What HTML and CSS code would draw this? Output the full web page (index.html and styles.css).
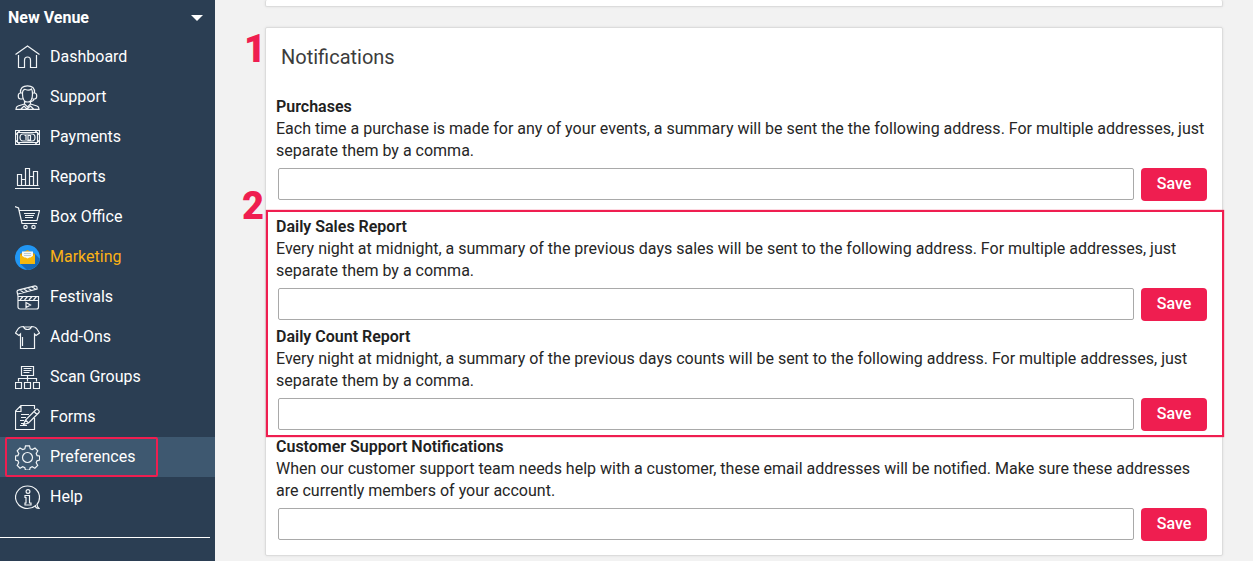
FILE: index.html
```html
<!DOCTYPE html>
<html lang="en">
<head>
<meta charset="utf-8">
<title>Preferences</title>
<link rel="stylesheet" href="styles.css">
</head>
<body>
<div class="app">
  <aside class="sidebar">
    <button class="venue" type="button">New Venue<span class="caret"></span></button>
    <nav class="menu">
      <a class="item" href="#"><svg class="icon" viewBox="0 0 25 25"><path d="M.5 9.500 12.500 1l12 8.500M3.500 10v12.500h6V15c0-4 6-4 6 0v7.500h6V10"/></svg>Dashboard</a>
      <a class="item" href="#"><svg class="icon" viewBox="0 0 25 25"><path d="M5.500 8C5 3 8 .8 12.500.8S20 3 19.500 8M7.500 8c0-3 2-4 3-3.500 3 1.300 5 .3 6-.5 1 1.500 1 3 1 5 0 5-2 8-5 8s-5-3-5-8zM7 8H5.500c-3 0-3 6 0 6H7.500M18 8h1.500c3 0 3 6 0 6H17.500M19 14c0 2-3 2.500-5 2.500M9.500 16v3l3 3 3-3v-3M9.500 19 3 21c-1.500.5-2 1.500-2 3.300h23c0-1.800-.5-2.800-2-3.300l-6.500-2M6 24l3-3 3 3 3.500-3 3 3"/></svg>Support</a>
      <a class="item" href="#"><svg class="icon" viewBox="0 0 25 25"><path d="M.5 5.500h24v14H.5zM2.500 7.500h20v10h-20zM1 9.500l4-4M24 9.500l-4-4M1 15.500l4 4M24 15.500l-4 4M8 9h9c4 0 4 7 0 7H8c-4 0-4-7 0-7zM9.500 10.500h1.500V15M13 10.500h2.500V15H13z"/></svg>Payments</a>
      <a class="item" href="#"><svg class="icon" viewBox="0 0 25 25"><path d="M0 23.500h25M2 20.500h21.500M2.500 20.500v-11h4v11M6.500 14.500h4v6M10.500 20.500v-17h4v17M14.500 11.500h4M18.500 20.500v-14h4v14"/></svg>Reports</a>
      <a class="item" href="#"><svg class="icon" viewBox="0 0 25 25"><path d="M0 1.500l3.500 1.500L7 18.500h15M4 5.500h20.500l-2.500 10H6.500M9 8.500h11M10 10.500h9M10 12.500h8"/><circle cx="10.500" cy="22" r="1.700"/><circle cx="18.500" cy="22" r="1.700"/></svg>Box Office</a>
      <a class="item highlight" href="#"><svg class="icon" viewBox="0 0 25 25"><g stroke="none"><circle cx="12.500" cy="12.500" r="12.500" fill="#2196f3"/><path fill="#1769b5" d="M20 9l4.700 4.700A12.500 12.500 0 0 1 12 25l-6.500-6z"/><path fill="#d99a08" d="M5 9l7.500-4L20 9v10H5z"/><path fill="#f5f7f8" d="M7 6.500h11v9H7z"/><path fill="#b9cbd5" d="M9 8h7v1H9zM9 10h7v1H9z"/><path fill="#f7b80c" d="M5 9.500l4.500 3h1l2 1 2-1h1l4.500-3V19H5z"/></g></svg>Marketing</a>
      <a class="item" href="#"><svg class="icon" viewBox="0 0 25 25"><path d="M3 11.500h20.500V22a2 2 0 0 1-2 2h-16.500a2 2 0 0 1-2-2zM3 15.500h20.500M3 11 2 6.500C2 5.500 3 5 4 4.800L20 .8c1 0 1.500.2 2 1.200v2L3 9M5 5l3.500 2.500M9 4l3.500 2.500M13 3l3.500 2.500M17 2l3.500 2M5 15l3-3.500M9.500 15l3-3.500M14 15l3-3.500M18.500 15l3-3.500M11 17.500v5l4.500-2.500z"/></svg>Festivals</a>
      <a class="item" href="#"><svg class="icon" viewBox="0 0 25 25"><path d="M8.500 1.500c1 4 7 4 8 0 3 0 4.500 1 5.500 2.500l2.500 4-3.500 2.500-1.500-1.500v14.500h-14V9L4 10.500.5 8 3 4c1-1.500 2.500-2.500 5.500-2.500zM9.500 2h6M7.500 12v9"/></svg>Add-Ons</a>
      <a class="item" href="#"><svg class="icon" viewBox="0 0 25 25"><path d="M6.500 1.500h12v9h-12zM8.500 3.500h8M8.500 5.500h8M8.500 7.500h6M12.500 10.500v6M3.500 16.500v-3h18v3M.5 17.500h6v6h-6zM9.500 17.500h6v6h-6zM18.500 17.500h6v6h-6z"/></svg>Scan Groups</a>
      <a class="item" href="#"><svg class="icon" viewBox="0 0 25 25"><path d="M19.500 4V.5H6L.5 6v18.500h19V13M.5 6.500H6V.5M8.500 19.500l2-4.500L21 4.500c1.500-1 4 1.500 3 3L13.500 18zM19 6.500l3 3M10.500 15l3 3M6 9.500h8M6 12.500h5M5 15.500h4M5 20.500h7M6 18.500h3"/></svg>Forms</a>
      <a class="item active" href="#"><svg class="icon" viewBox="0 0 25 25"><circle cx="12.500" cy="12.500" r="5"/><path d="M10.500.8h4l.8 3 2 .8 2.700-1.600 2.800 2.800-1.600 2.700.9 2.100 2.500.4v4l-2.600.7-.8 2.100 1.500 2.600-2.800 2.800-2.700-1.500-2 .9-.7 2.600h-4l-.7-2.600-2.100-.9L5 23.200l-2.800-2.800 1.500-2.600-.8-2.100L.5 15v-4l2.400-.4.9-2.100-1.600-2.700L5 3l2.700 1.600 2.100-.8z"/></svg>Preferences<span class="mark-item"></span></a>
      <a class="item" href="#"><svg class="icon" viewBox="0 0 25 25"><path d="M20.500 20.800C18 22.800 15.500 23.500 12.500 23.500 6 23.500.5 18.500.5 12.300S6 1 12.500 1s12 5 12 11.300c0 3-1 5.400-2.500 7.200.2 1.500 1 3 2 4-1.800 0-3.500-.7-3.500-2.700zM10 10.500h4.500V18H16v2H10v-2h1v-5.500h-1z"/><circle cx="13" cy="6.500" r="1.900"/></svg>Help</a>
    </nav>
    <hr class="rule">
  </aside>
  <main class="content">
    <section class="card previous"></section>
    <section class="card">
      <span class="number one">1</span>
      <h2 class="title">Notifications</h2>
      <form class="group first">
        <label class="name" for="purchases">Purchases</label>
        <p class="text">Each time a purchase is made for any of your events, a summary will be sent the the following address. For multiple addresses, just separate them by a comma.</p>
        <div class="field"><input class="input" id="purchases" type="text"><button class="save" type="button">Save</button></div>
      </form>
      <div class="marked">
        <span class="number two">2</span>
        <form class="group">
          <label class="name" for="sales">Daily Sales Report</label>
          <p class="text">Every night at midnight, a summary of the previous days sales will be sent to the following address. For multiple addresses, just separate them by a comma.</p>
          <div class="field"><input class="input" id="sales" type="text"><button class="save" type="button">Save</button></div>
        </form>
        <form class="group">
          <label class="name" for="counts">Daily Count Report</label>
          <p class="text">Every night at midnight, a summary of the previous days counts will be sent to the following address. For multiple addresses, just separate them by a comma.</p>
          <div class="field"><input class="input" id="counts" type="text"><button class="save" type="button">Save</button></div>
        </form>
        <span class="mark-groups"></span>
      </div>
      <form class="group">
        <label class="name" for="support">Customer Support Notifications</label>
        <p class="text">When our customer support team needs help with a customer, these email addresses will be notified. Make sure these addresses are currently members of your account.</p>
        <div class="field"><input class="input" id="support" type="text"><button class="save" type="button">Save</button></div>
      </form>
    </section>
  </main>
</div>
</body>
</html>
```
FILE: styles.css
```css
* { box-sizing: border-box; }
body {
  margin: 0;
  background: #f2f2f2;
  color: #262626;
  font-family: Roboto, "Liberation Sans", sans-serif;
  font-size: 16px;
}
.app { display: flex; min-height: 100vh; }
.sidebar { flex: none; width: 215px; background: #2b3e53; color: #fff; }
.venue {
  display: flex;
  align-items: center;
  justify-content: space-between;
  width: 100%;
  height: 37px;
  padding: 0 12px 2px 8px;
  border: 0;
  background: none;
  color: #fff;
  font: 700 16px Roboto, sans-serif;
}
.caret { border: 6px solid transparent; border-top-color: #fff; border-bottom: 0; }
.menu { display: flex; flex-direction: column; }
.item {
  position: relative;
  display: flex;
  align-items: center;
  gap: 10px;
  height: 40px;
  padding: 0 0 2px 15px;
  color: #fff;
  text-decoration: none;
}
.icon { width: 25px; height: 25px; margin-top: 2px; fill: none; stroke: #f1f4f6; stroke-width: 1.2; }
.highlight { color: #fbb216; }
.active { background: #3e5870; }
.mark-item {
  position: absolute;
  inset: 0 auto 0 5px;
  width: 153px;
  border: 2px solid #ef1e50;
  border-radius: 2px;
}
.rule { height: 1px; margin: 20px 5px 0 0; border: 0; background: #fff; }
.content { flex: 1; padding: 0 30px 5px 50px; }
.card {
  position: relative;
  padding: 0 10px 10px;
  border: 1px solid #dcdcdc;
  border-radius: 2px;
  background: #fff;
  box-shadow: 0 0 3px rgba(0, 0, 0, 0.08);
}
.previous { height: 7px; margin-bottom: 20px; padding: 0; border-top: 0; }
.title { margin: 0; padding: 16px 5px 24px; font-size: 20px; font-weight: 400; line-height: 27px; color: #3c3c3c; }
.first { margin-bottom: 10px; }
.name { display: block; color: #212121; font-weight: 600; line-height: 23px; }
.text { margin: 0; line-height: 22px; }
.field { display: flex; gap: 7px; padding: 6px 5px 4px 2px; }
.input { flex: 1; min-width: 0; height: 32px; padding: 0 8px; border: 1px solid #a9a9a9; border-radius: 2px; background: #fff; font: inherit; }
.save { width: 66px; height: 33px; padding: 0 0 2px; border: 0; border-radius: 4px; background: #ef1e50; color: #fff; font: 500 16px Roboto, sans-serif; }
.marked { position: relative; }
.mark-groups { position: absolute; inset: -5px -12px -2px -10px; border: 2px solid #ef1e50; box-shadow: 0 0 1px #ef1e50; pointer-events: none; }
.number { position: absolute; color: #ef1e50; font: 900 38px/40px "Liberation Sans Narrow", Roboto, sans-serif; }
.one { top: 1px; right: 100%; }
.two { top: -29px; right: 100%; margin-right: 12px; }
```
